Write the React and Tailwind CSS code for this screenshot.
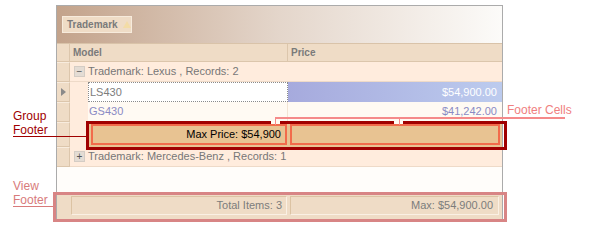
import React from "react";

const font = "font-['Liberation_Sans',Arial,sans-serif]";

const Indicator = ({ arrow = false, h = "h-[20px]" }) => (
  <div className={`${h} w-[13px] shrink-0 bg-[#efdcc6] border-r border-b border-[#dcc6ac] border-t border-t-[#f8ecde] flex items-center justify-center`}>
    {arrow && (
      <div className="w-0 h-0 border-y-[4px] border-y-transparent border-l-[5px] border-l-[#8a8a8a]" />
    )}
  </div>
);

const GroupRow = ({ sign, label }) => (
  <div className="flex h-[20px]">
    <Indicator />
    <div className="flex-1 flex items-center bg-[#ffecdd] border-b border-[#eedac8] pl-[4px]">
      <div className="w-[11px] h-[11px] bg-[#e4dcd4] border border-[#d4ccc4] flex items-center justify-center text-[#555] text-[10px] leading-none mr-[3px]">
        {sign}
      </div>
      <span className="text-[#777]">{label}</span>
    </div>
  </div>
);

export default function App() {
  return (
    <div className={`relative w-[600px] h-[248px] bg-white overflow-hidden text-[11px] leading-none ${font}`}>
      <div className="pt-[5px] pl-[56px]">
        <div className="w-[447px] h-[216px] border border-[#ababab] border-b-0 bg-[#fffdfa]">
          {/* group panel */}
          <div className="h-[37px] bg-gradient-to-r from-[#c3a38b] via-[#e4d6cb] to-[#fcfbf9] pl-[5px] pt-[10px]">
            <div className="w-[70px] h-[17px] bg-[#efdcc6] border border-[#f7ebdc] flex items-center pl-[4px] gap-[5px]">
              <span className="font-bold text-[10px] text-[#7a7a7a]">Trademark</span>
              <div className="w-0 h-0 border-x-[4px] border-x-transparent border-b-[7px] border-b-[#f3dca6]" />
            </div>
          </div>

          {/* column header */}
          <div className="flex h-[19px] border-t border-[#d9c3a9]">
            <div className="w-[13px] bg-[#efdcc6] border-r border-b border-[#dcc6ac]" />
            <div className="w-[218px] bg-[#efdcc6] border-r border-b border-[#dcc6ac] flex items-center pl-[3px] font-bold text-[10px] text-[#7a7a7a]">
              Model
            </div>
            <div className="flex-1 bg-[#efdcc6] border-b border-[#dcc6ac] flex items-center pl-[3px] font-bold text-[10px] text-[#7a7a7a]">
              Price
            </div>
          </div>

          <GroupRow sign="−" label="Trademark: Lexus , Records: 2" />

          {/* LS430 */}
          <div className="flex h-[20px]">
            <Indicator arrow />
            <div className="w-[18px] bg-[#ffecdd]" />
            <div className="w-[200px] bg-white border border-dotted border-[#8a8a8a] flex items-center pl-[1px] text-[#7c7c7c]">
              LS430
            </div>
            <div className="flex-1 bg-gradient-to-r from-[#a6aadd] to-[#bccbee] flex items-center justify-end pr-[5px] text-white">
              $54,900.00
            </div>
          </div>

          {/* GS430 */}
          <div className="flex h-[20px]">
            <Indicator />
            <div className="w-[18px] bg-[#ffecdd]" />
            <div className="w-[200px] bg-[#fffaf3] border-r border-b border-[#f3e4d4] flex items-center pl-[1px] text-[#8a8ac4]">
              GS430
            </div>
            <div className="flex-1 bg-[#fffaf3] border-b border-[#f3e4d4] flex items-center justify-end pr-[5px] text-[#8a8ac4]">
              $41,242.00
            </div>
          </div>

          {/* group footer */}
          <div className="flex h-[25px]">
            <Indicator h="h-[25px]" />
            <div className="w-[18px] bg-[#ffecdd]" />
            <div className="flex-1 bg-[#e8c392] flex gap-[3px] pl-[3px] pr-[2px] py-[2px]">
              <div className="w-[196px] border-2 border-[#f26b4b] flex items-center justify-end pr-[4px] text-black">
                Max Price: $54,900
              </div>
              <div className="flex-1 border-2 border-[#f26b4b]" />
            </div>
          </div>

          <GroupRow sign="+" label="Trademark: Mercedes-Benz , Records: 1" />

          <div className="h-[26px] bg-[#fffdfa]" />

          {/* view footer */}
          <div className="h-[27px] bg-[#efdcc6] flex gap-[3px] pl-[14px] pr-[3px] pt-[3px] pb-[5px]">
            <div className="w-[216px] border border-[#dcc3a3] border-r-[#faf0e4] border-b-[#faf0e4] flex items-center justify-end pr-[4px] text-[#7c7c7c]">
              Total Items: 3
            </div>
            <div className="flex-1 border border-[#dcc3a3] border-r-[#faf0e4] border-b-[#faf0e4] flex items-center justify-end pr-[5px] text-[#7c7c7c]">
              Max: $54,900.00
            </div>
          </div>
        </div>
      </div>

      {/* Group Footer annotation */}
      <div className="absolute left-[13px] top-[109px] text-[12px] leading-[14px] text-[#a00000]">
        Group
        <br />
        Footer
      </div>
      <div className="absolute left-[13px] top-[136px] w-[74px] h-px bg-[#a00000]" />
      <div className="absolute left-[86px] top-[121px] w-[421px] h-[29px] border-[3px] border-[#a00000]" />

      {/* Footer Cells annotation */}
      <div className="absolute left-[507px] top-[103px] text-[12px] leading-[14px] text-[#f08080]">Footer Cells</div>
      <div className="absolute left-[275px] top-[117px] w-[290px] h-[2px] bg-[#f58a8a]" />
      <div className="absolute left-[271px] top-[121px] w-[9px] h-[3px] bg-[#fffaf3]" />
      <div className="absolute left-[394px] top-[121px] w-[9px] h-[3px] bg-[#fffaf3]" />
      <div className="absolute left-[275px] top-[117px] w-px h-[8px] bg-[#f58a8a]" />
      <div className="absolute left-[399px] top-[117px] w-px h-[8px] bg-[#f58a8a]" />

      {/* View Footer annotation */}
      <div className="absolute left-[13px] top-[179px] text-[12px] leading-[14px] text-[#d87b7b]">
        View
        <br />
        Footer
      </div>
      <div className="absolute left-[13px] top-[206px] w-[40px] h-px bg-[#d87b7b]" />
      <div className="absolute left-[53px] top-[192px] w-[454px] h-[30px] border-[3px] border-[#d88585]" />
    </div>
  );
}
